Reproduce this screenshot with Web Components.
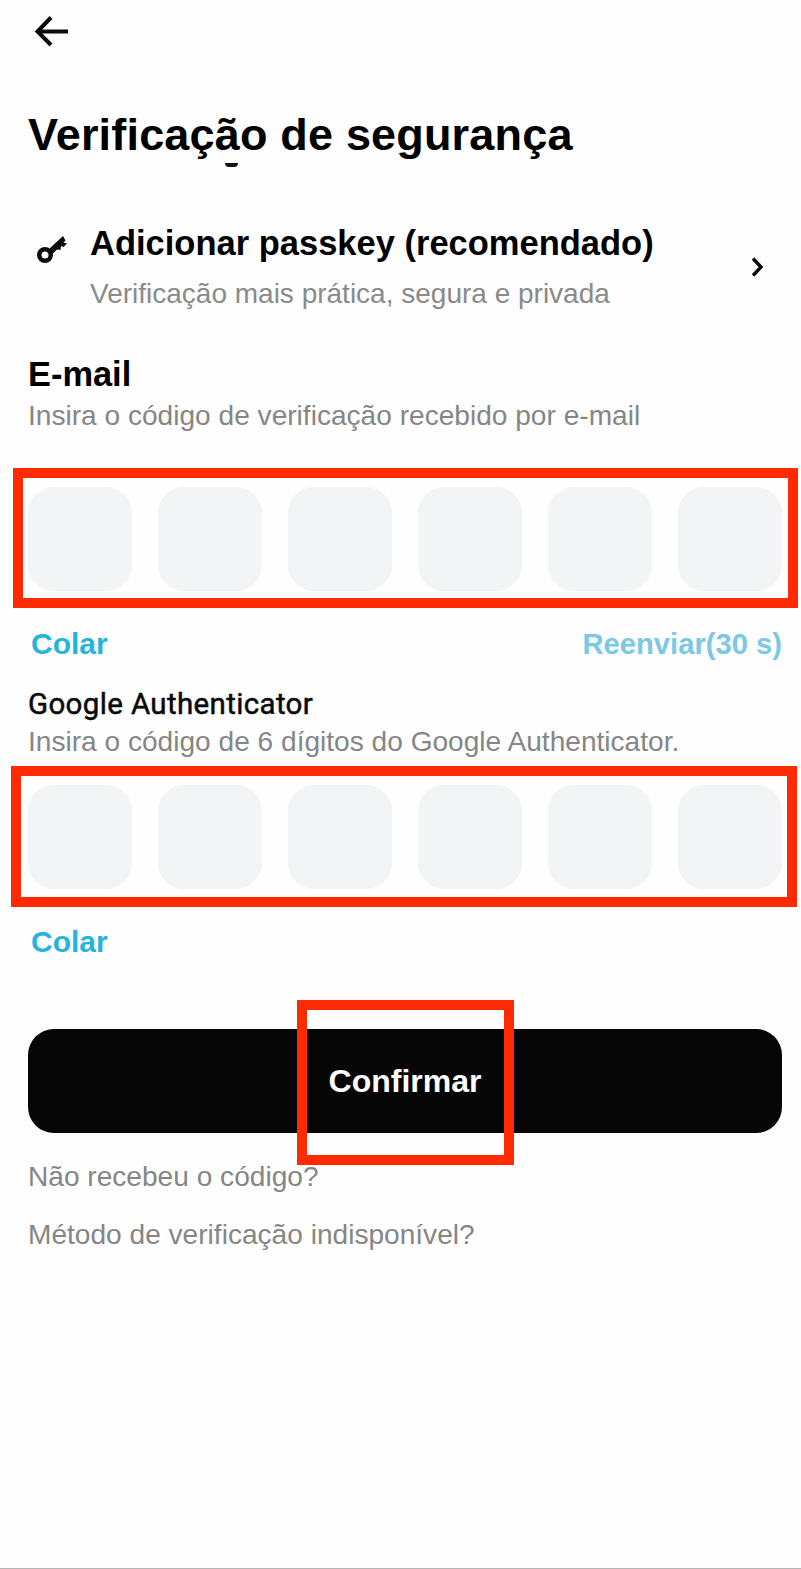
<!DOCTYPE html>
<html lang="pt">
<head>
<meta charset="utf-8">
<style>
html,body{margin:0;padding:0;background:#fefefe}
body{font-family:"Liberation Sans",Arial,sans-serif}
</style>
</head>
<body>
<verify-page>
  <back-bar></back-bar>
  <page-title>Verificação de segurança</page-title>
  <passkey-row title-text="Adicionar passkey (recomendado)" sub-text="Verificação mais prática, segura e privada"></passkey-row>
  <code-section kind="email" heading="E-mail" hint="Insira o código de verificação recebido por e-mail" resend="Reenviar(30 s)"></code-section>
  <code-section kind="ga" heading="Google Authenticator" hint="Insira o código de 6 dígitos do Google Authenticator."></code-section>
  <confirm-button>Confirmar</confirm-button>
  <help-link style="margin-top:29px">Não recebeu o código?</help-link>
  <help-link style="margin-top:28px">Método de verificação indisponível?</help-link>
</verify-page>
<script>
function def(name, html){
  customElements.define(name, class extends HTMLElement{
    connectedCallback(){
      if(this.shadowRoot) return;
      const r=this.attachShadow({mode:'open'});
      r.innerHTML=typeof html==='function'?html(this):html;
    }
  });
}
def('verify-page',`<style>:host{display:block;box-sizing:border-box;height:1569px;padding:0 19px 0 28px;border-bottom:1px solid #b5b5b5;background:#fefefe;color:#000;font-family:"Liberation Sans",Arial,sans-serif;overflow:hidden}</style><slot></slot>`);
def('back-bar',`<style>:host{display:block;height:64px}svg{display:block;position:relative;left:6px;top:14px}</style>
<svg width="36" height="36" viewBox="0 0 36 36" fill="none" stroke="#0a0a0a" stroke-width="4"><path d="M34 17.500H4"/><path d="M17 3.500 3.500 17.500 17 31"/></svg>`);
def('page-title',`<style>:host{display:block;position:relative;font-size:45px;font-weight:700;line-height:52px;margin-top:45px;letter-spacing:.18px}
b{position:absolute;left:197px;top:54px;width:13px;height:4px;background:#111;border-radius:0 0 7px 7px}</style><slot></slot><b></b>`);
def('passkey-row',h=>`<style>:host{display:flex;align-items:flex-start;margin-top:65px;height:86px;position:relative}
svg{flex:none;margin:10px 0 0 8px}.t{margin-left:21px;flex:1;min-width:0}
.a{font-size:34.500px;font-weight:700;line-height:44px;white-space:nowrap;margin-top:-5px}.b{font-size:28px;line-height:34px;color:#8a8a8a;margin-top:12px;white-space:nowrap}
.c{position:absolute;left:722px;top:30px}</style>
<svg width="33" height="28" viewBox="0 0 33 28" fill="#0a0a0a"><path fill-rule="evenodd" d="M9 11a8 8 0 1 1 0 16 8 8 0 0 1 0-16Zm0 4.500a3.500 3.500 0 1 0 0 7 3.500 3.500 0 0 0 0-7Z"/><path d="M13 13 27 0l2.500 4.500-2 2 3.500 1-3.500 3.500-2.500-1-.5 4-3.500-.5-5.500 5.500Z"/></svg>
<div class="t"><div class="a">${h.getAttribute('title-text')}</div><div class="b">${h.getAttribute('sub-text')}</div></div>
<svg class="c" style="margin:0" width="16" height="22" viewBox="0 0 16 22" fill="none" stroke="#0a0a0a" stroke-width="3.400"><path d="M3 2.500 11 11 3 19.500"/></svg>`);
def('code-cells',`<style>:host{display:grid;grid-template-columns:repeat(6,104px);justify-content:space-between;position:relative}
i{display:block;height:104px;background:#f3f4f5;border-radius:26px}
.red{position:absolute;box-sizing:border-box;border:10px solid #ff2a00;left:var(--l);right:var(--r);top:var(--t);bottom:var(--b)}</style>
<i></i><i></i><i></i><i></i><i></i><i></i><div class="red"></div>`);
def('code-section',h=>{
  const ga=h.getAttribute('kind')==='ga';
  const resend=h.getAttribute('resend');
  return `<style>:host{display:block;margin-top:${ga?'27px':'42px'}}
.h{${ga?'font:400 29.500px Roboto,sans-serif;line-height:34px;letter-spacing:.35px;-webkit-text-stroke:.5px #0a0a0a;color:#0a0a0a':'font-size:34.400px;font-weight:700;line-height:40px'};white-space:nowrap}
.s{font-size:28.100px;line-height:30px;color:#868686;white-space:nowrap;margin-top:${ga?'6px':'7px'}}
code-cells{margin-top:${ga?'28px':'56px'};${ga?'--l:-17px;--r:-15px;--t:-19px;--b:-18px':'--l:-15px;--r:-16px;--t:-19px;--b:-17px'}}
.f{display:flex;justify-content:space-between;margin-top:37px;padding:0 0 0 3px;font-size:30px;font-weight:700;line-height:32px;color:#25b4dc;white-space:nowrap}
.r{color:#7bc9e3;font-size:29.200px}</style>
<div class="h">${h.getAttribute('heading')}</div><div class="s">${h.getAttribute('hint')}</div>
<code-cells></code-cells>
<div class="f"><span>Colar</span>${resend?`<span class="r">${resend}</span>`:''}</div>`});
def('confirm-button',`<style>:host{display:flex;align-items:center;justify-content:center;position:relative;height:104px;margin:71px 0 0;background:#060606;border-radius:26px;color:#fff;font-size:32px;font-weight:700}
.red{position:absolute;box-sizing:border-box;border:10px solid #ff2a00;left:269px;width:217px;top:-29px;height:165px}</style><slot></slot><div class="red"></div>`);
def('help-link',`<style>:host{display:block;font-size:28.100px;line-height:30px;color:#868686;white-space:nowrap}</style><slot></slot>`);
</script>
</body>
</html>
